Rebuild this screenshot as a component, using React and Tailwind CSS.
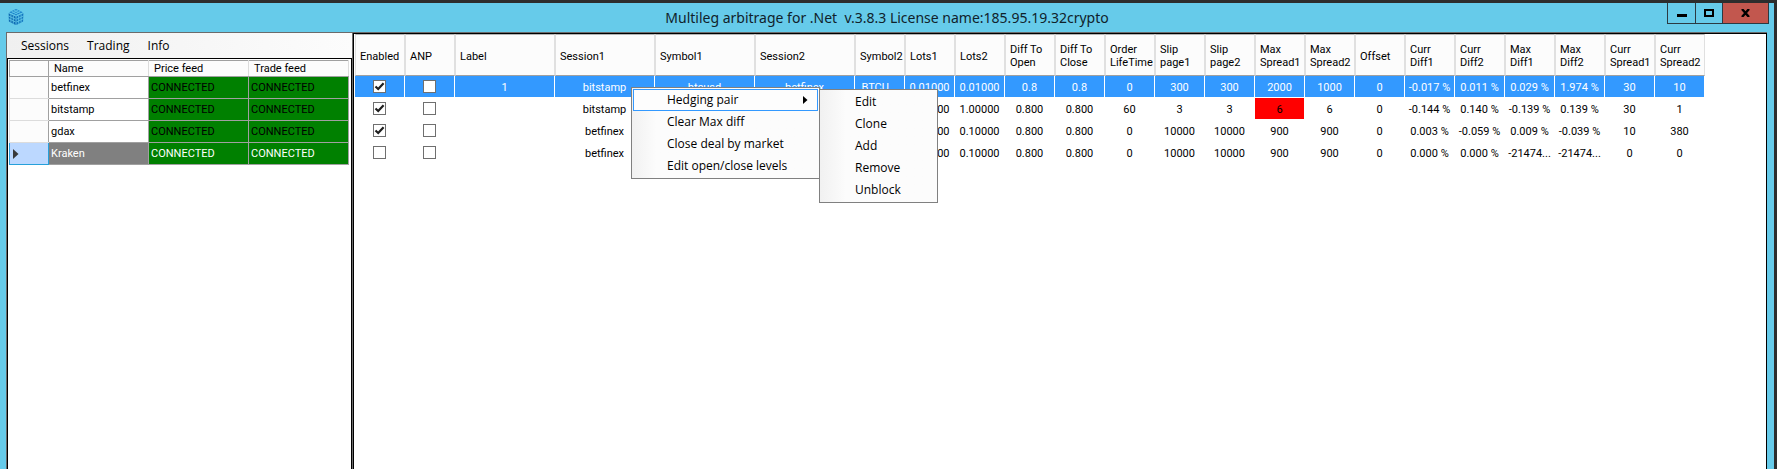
import React, { useState } from "react";

const sessions = [
  { name: "betfinex", price: "CONNECTED", trade: "CONNECTED" },
  { name: "bitstamp", price: "CONNECTED", trade: "CONNECTED" },
  { name: "gdax", price: "CONNECTED", trade: "CONNECTED" },
  { name: "Kraken", price: "CONNECTED", trade: "CONNECTED" },
];

// wide columns are 100px, the rest 50px
const columns = [
  { title: "Enabled" },
  { title: "ANP" },
  { title: "Label", wide: true },
  { title: "Session1", wide: true },
  { title: "Symbol1", wide: true },
  { title: "Session2", wide: true },
  { title: "Symbol2" },
  { title: "Lots1" },
  { title: "Lots2" },
  { title: "Diff To\nOpen" },
  { title: "Diff To\nClose" },
  { title: "Order\nLifeTime" },
  { title: "Slip\npage1" },
  { title: "Slip\npage2" },
  { title: "Max\nSpread1" },
  { title: "Max\nSpread2" },
  { title: "Offset" },
  { title: "Curr\nDiff1" },
  { title: "Curr\nDiff2" },
  { title: "Max\nDiff1" },
  { title: "Max\nDiff2" },
  { title: "Curr\nSpread1" },
  { title: "Curr\nSpread2" },
];

const initialPairs = [
  {
    enabled: true,
    anp: false,
    cells: ["1", "bitstamp", "btcusd", "betfinex", "BTCU...", "0.01000", "0.01000", "0.8", "0.8", "0", "300", "300", "2000", "1000", "0", "-0.017 %", "0.011 %", "0.029 %", "1.974 %", "30", "10"],
  },
  {
    enabled: true,
    anp: false,
    alert: 12,
    cells: ["", "bitstamp", "", "", "", "1.00000", "1.00000", "0.800", "0.800", "60", "3", "3", "6", "6", "0", "-0.144 %", "0.140 %", "-0.139 %", "0.139 %", "30", "1"],
  },
  {
    enabled: true,
    anp: false,
    cells: ["", "betfinex", "", "", "", "0.10000", "0.10000", "0.800", "0.800", "0", "10000", "10000", "900", "900", "0", "0.003 %", "-0.059 %", "0.009 %", "-0.039 %", "10", "380"],
  },
  {
    enabled: false,
    anp: false,
    cells: ["", "betfinex", "", "", "", "0.10000", "0.10000", "0.800", "0.800", "0", "10000", "10000", "900", "900", "0", "0.000 %", "0.000 %", "-21474...", "-21474...", "0", "0"],
  },
];

const CubeIcon = () => (
  <svg width="16" height="16" viewBox="0 0 16 16" aria-hidden="true">
    <path d="M8 0 L14.8 3.2 L8 6.6 L1.2 3.2 Z" fill="#1c84cc" />
    <path d="M0.6 4.2 L7.6 7.4 L7.6 16 L0.9 12.6 Z" fill="#0f6cb4" />
    <path d="M15.4 4.2 L8.4 7.4 L8.4 16 L15.1 12.6 Z" fill="#1478c0" />
    <g stroke="#66cbea" strokeWidth="0.8" fill="none">
      <path d="M3.4 2.1 L10.3 5.5 M5.7 1 L12.6 4.4 M12.6 2.1 L5.7 5.5 M10.3 1 L3.4 4.4" />
      <path d="M2.9 5.2 V13.6 M5.3 6.4 V14.8 M0.4 6.9 L7.6 10.2 M0.4 9.7 L7.6 13" />
      <path d="M13.1 5.2 V13.6 M10.7 6.4 V14.8 M15.6 6.9 L8.4 10.2 M15.6 9.7 L8.4 13" />
    </g>
  </svg>
);

const TitleBar = () => (
  <header className="flex h-[29px] items-start bg-[#66cbea]">
    <div className="flex w-[107px] shrink-0 pt-[6px] pl-2">
      <CubeIcon />
    </div>
    <h1 className="flex-1 pt-[5px] text-center font-['Noto_Sans','Open_Sans',sans-serif] text-[14px] leading-[20px] whitespace-pre text-[#10222a]">
      Multileg arbitrage for .Net  v.3.8.3 License name:185.95.19.32crypto
    </h1>
    <div className="mr-[5px] flex h-[21px] shrink-0 border border-t-0 border-[#2b3a42]">
      <button type="button" aria-label="Minimize" className="flex w-[27px] items-center justify-center">
        <svg width="10" height="10" viewBox="0 0 10 10">
          <path d="M0 6 H10 V9 H0 Z" />
        </svg>
      </button>
      <button type="button" aria-label="Maximize" className="flex w-[27px] items-center justify-center border-l border-[#2b3a42]">
        <svg width="10" height="8" viewBox="0 0 10 8">
          <path d="M1 1 H9 V7 H1 Z" fill="none" stroke="#000" strokeWidth="2" />
        </svg>
      </button>
      <button type="button" aria-label="Close" className="flex w-[46px] items-center justify-center border-l border-[#2b3a42] bg-[#c2574e]">
        <svg width="9" height="8" viewBox="0 0 9 8">
          <path d="M1 0 L8 8 M8 0 L1 8" stroke="#000" strokeWidth="2.4" />
        </svg>
      </button>
    </div>
  </header>
);

const GridCheck = ({ label, checked, onChange }) => (
  <span className="grid place-items-center">
    <input
      type="checkbox"
      aria-label={label}
      checked={checked}
      onChange={onChange}
      className="col-start-1 row-start-1 size-[13px] appearance-none border border-[#6f6f6f] bg-white"
    />
    {checked && (
      <svg width="11" height="11" viewBox="0 0 11 11" className="pointer-events-none col-start-1 row-start-1">
        <path d="M1.5 5.5 L4.2 8 L9.6 2.2" fill="none" stroke="#1e1e1e" strokeWidth="2.2" />
      </svg>
    )}
  </span>
);

const SessionsPanel = () => {
  const [current, setCurrent] = useState(3);

  return (
    <section className="flex w-[346px] shrink-0 flex-col border-l border-[#6b6b6b] bg-white">
      <nav className="flex h-[25px] items-center gap-[18px] bg-linear-to-r from-[#f0f0f0] to-[#fcfcfc] pl-[14px] font-['Open_Sans','Noto_Sans',sans-serif] text-[12px] leading-4">
        <button type="button">Sessions</button>
        <button type="button">Trading</button>
        <button type="button">Info</button>
      </nav>
      <div className="flex-1 border-t border-r border-l border-black pt-px pl-px">
        <table className="w-[339px] table-fixed border-collapse text-left">
          <colgroup>
            <col className="w-[39px]" />
            <col className="w-[100px]" />
            <col className="w-[100px]" />
            <col className="w-[100px]" />
          </colgroup>
          <thead>
            <tr className="h-4">
              <th className="border border-[#a0a0a0] bg-[#fcfcfc]" aria-label="Row" />
              {["Name", "Price feed", "Trade feed"].map((t) => (
                <th key={t} className="border-t border-r border-b border-t-[#a0a0a0] border-r-[#dcdcdc] border-b-[#a0a0a0] bg-[#fcfcfc] pl-[5px] font-normal">
                  {t}
                </th>
              ))}
            </tr>
          </thead>
          <tbody>
            {sessions.map((s, i) => (
              <tr key={s.name} className={"h-[22px] " + (i === current ? "text-white" : "text-black")} onClick={() => setCurrent(i)}>
                <td className={i === current ? "border border-[#26a0da] bg-[#bcd8ff] pl-[3px]" : "border border-[#dcdcdc] border-r-[#a0a0a0] bg-[#fcfcfc]"}>
                  {i === current && (
                    <svg width="6" height="10" viewBox="0 0 6 10">
                      <path d="M0 0 L5.5 5 L0 10 Z" fill="#3a3a3a" />
                    </svg>
                  )}
                </td>
                <td className={"border border-[#a0a0a0] pl-[2px] " + (i === current ? "bg-[#808080]" : "bg-white")}>{s.name}</td>
                <td className="border border-[#a0a0a0] bg-[#008000] pl-[2px]">{s.price}</td>
                <td className="border border-[#a0a0a0] bg-[#008000] pl-[2px]">{s.trade}</td>
              </tr>
            ))}
          </tbody>
        </table>
      </div>
    </section>
  );
};

const PairsPanel = () => {
  const [pairs, setPairs] = useState(initialPairs);

  const toggle = (index, key) => {
    setPairs(pairs.map((p, i) => (i === index ? { ...p, [key]: !p[key] } : p)));
  };

  return (
    <section className="min-w-0 flex-1 overflow-hidden border-r border-black bg-white pl-px">
      <table className="w-[1350px] table-fixed border-separate border-spacing-0">
        <colgroup>
          {columns.map((c) => (
            <col key={c.title} className={c.wide ? "w-[100px]" : "w-[50px]"} />
          ))}
        </colgroup>
        <thead>
          <tr className="h-[42px]">
            {columns.map((c) => (
              <th key={c.title} className="border border-x-[#e0e0e0] border-t-[#b4b4b4] border-b-[#a0a0a0] bg-[#fcfcfc] pt-[2px] pl-1 text-left leading-[13px] font-normal whitespace-pre">
                {c.title}
              </th>
            ))}
          </tr>
        </thead>
        <tbody>
          {pairs.map((p, i) => (
            <tr key={i} className={"h-[22px] text-center whitespace-nowrap " + (i === 0 ? "bg-[#3399ff] text-white" : "bg-white")}>
              <td className="border-r border-b border-white">
                <GridCheck label={"Enabled " + (i + 1)} checked={p.enabled} onChange={() => toggle(i, "enabled")} />
              </td>
              <td className="border-r border-b border-white">
                <GridCheck label={"ANP " + (i + 1)} checked={p.anp} onChange={() => toggle(i, "anp")} />
              </td>
              {p.cells.map((cell, n) => (
                <td key={n} className={"border-r border-b border-white pt-[2px] " + (p.alert === n ? "bg-[#ff0000]" : "")}>
                  {cell}
                </td>
              ))}
            </tr>
          ))}
        </tbody>
      </table>
    </section>
  );
};

const ContextMenu = () => (
  <div className="absolute top-[84px] left-[631px] flex items-start font-['Open_Sans','Noto_Sans',sans-serif] text-[12px] leading-4">
    <div className="flex w-[189px] flex-col border border-[#808080] bg-linear-to-r from-[#f1f1f1] from-0% via-[#fcfcfc] via-13% to-[#fcfcfc] p-px">
      <button type="button" className="flex h-[22px] items-center justify-between border border-[#3399ff] bg-[#fdfdfd] pr-[9px] pl-[33px]">
        Hedging pair
        <svg width="5" height="8" viewBox="0 0 5 8">
          <path d="M0 0 L4.5 4 L0 8 Z" />
        </svg>
      </button>
      {["Clear Max diff", "Close deal by market", "Edit open/close levels"].map((t) => (
        <button key={t} type="button" className="h-[22px] pl-[34px] text-left">
          {t}
        </button>
      ))}
    </div>
    <div className="mt-[2px] -ml-px flex w-[119px] flex-col border border-[#808080] bg-linear-to-r from-[#f1f1f1] from-0% via-[#fcfcfc] via-22% to-[#fcfcfc] p-px">
      {["Edit", "Clone", "Add", "Remove", "Unblock"].map((t) => (
        <button key={t} type="button" className="h-[22px] pl-[34px] text-left">
          {t}
        </button>
      ))}
    </div>
  </div>
);

const App = () => {
  return (
    <div className="relative flex min-h-screen flex-col border-t-[3px] border-r-[3px] border-[#2d2d2d] bg-[#66cbea] font-[Roboto,'Liberation_Sans',sans-serif] text-[11px] leading-[13px] text-black">
      <TitleBar />
      <main className="mr-[7px] ml-[6px] flex flex-1 border-t border-[#6b6b6b]">
        <SessionsPanel />
        <div className="w-[2px] shrink-0 border-r border-black bg-[#6b6b6b]" />
        <div className="flex min-w-0 flex-1 border-t border-black">
          <PairsPanel />
        </div>
      </main>
      <ContextMenu />
    </div>
  );
};

export default App;
